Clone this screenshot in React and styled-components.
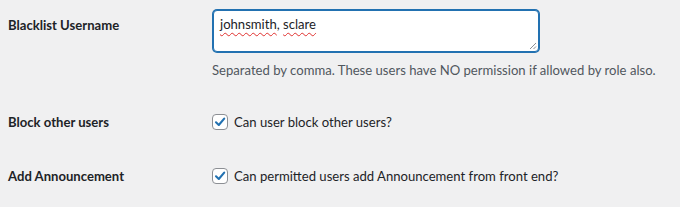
import React from 'react'
import styled, { createGlobalStyle } from 'styled-components'

const Global = createGlobalStyle`
  html, body {
    margin: 0;
    padding: 0;
    background: #f0f0f1;
  }
  body {
    font-family: Lato, "Noto Sans", sans-serif;
    font-size: 13.1px;
    color: #1d2327;
  }
`

const Form = styled.div`
  padding: 0 8px;
`

const Row = styled.div`
  display: grid;
  grid-template-columns: 204px 1fr;
  padding: ${props => props.$pad || '15px 0'};
`

const Label = styled.div`
  font-weight: 700;
  line-height: 24px;
  padding-top: ${props => props.$top || '0'};
`

const Field = styled.div`
  display: flex;
  flex-direction: column;
`

const TextBox = styled.div`
  position: relative;
  box-sizing: border-box;
  width: 326px;
  height: 42px;
  border: 1px solid #2271b1;
  box-shadow: 0 0 0 1px #2271b1;
  border-radius: 4px;
  background: #fff;
  padding: 3px 6px;
  line-height: 20px;
  margin-left: 1px;
`

const Misspelled = styled.span`
  text-decoration: underline wavy #e0312f;
  text-decoration-thickness: 1px;
  text-underline-offset: 3px;
`

const Grip = styled.svg`
  position: absolute;
  right: 1px;
  bottom: 1px;
`

const Description = styled.p`
  margin: 8px 0 0;
  line-height: 21px;
  color: #50575e;
  white-space: nowrap;
`

const CheckLine = styled.label`
  display: flex;
  align-items: center;
  gap: 6px;
  line-height: 24px;
`

const Box = styled.span`
  box-sizing: border-box;
  width: 16px;
  height: 16px;
  border: 1px solid #8c8f94;
  border-radius: 4px;
  background: #fff;
  display: flex;
  align-items: center;
  justify-content: center;
`

const Check = () => (
  <Box>
    <svg width="12" height="12" viewBox="0 0 12 12">
      <path d="M2 6.3 L4.8 9 L10.2 2.6" fill="none" stroke="#2271b1" strokeWidth="2.1" strokeLinecap="round" strokeLinejoin="round" />
    </svg>
  </Box>
)

const App = () => {
  return (
    <>
      <Global />
      <Form>
        <Row $pad="10px 0 14px">
          <Label $top="3px">Blacklist Username</Label>
          <Field>
            <TextBox role="textbox">
              <Misspelled>johnsmith</Misspelled>, <Misspelled>sclare</Misspelled>
              <Grip width="8" height="8" viewBox="0 0 8 8">
                <path d="M7 1 L1 7 M7 4.5 L4.5 7" stroke="#8c8f94" strokeWidth="1" />
              </Grip>
            </TextBox>
            <Description>Separated by comma. These users have NO permission if allowed by role also.</Description>
          </Field>
        </Row>
        <Row>
          <Label>Block other users</Label>
          <CheckLine>
            <Check />
            Can user block other users?
          </CheckLine>
        </Row>
        <Row>
          <Label>Add Announcement</Label>
          <CheckLine>
            <Check />
            Can permitted users add Announcement from front end?
          </CheckLine>
        </Row>
      </Form>
    </>
  )
}

export default App
